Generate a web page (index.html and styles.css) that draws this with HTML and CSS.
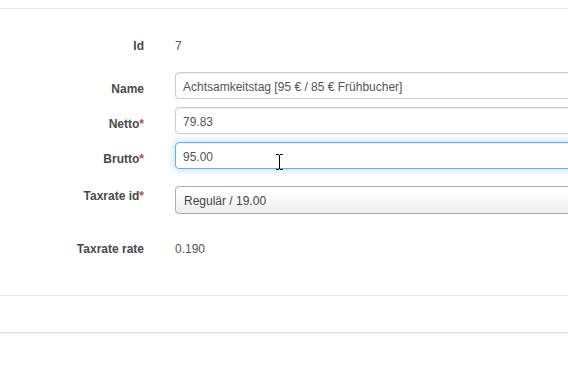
FILE: index.html
```html
<!DOCTYPE html>
<html lang="de">
<head>
    <meta charset="UTF-8">
    <title>Taxrate bearbeiten</title>
    <link rel="stylesheet" href="styles.css">
</head>
<body>

    <div class="topbar"></div>

    <form class="edit-form">
        <div class="row static">
            <label>Id</label>
            <span class="value">7</span>
        </div>

        <div class="row">
            <label for="name">Name</label>
            <input type="text" id="name" value="Achtsamkeitstag [95 € / 85 € Frühbucher]">
        </div>

        <div class="row">
            <label for="netto">Netto<span class="req">*</span></label>
            <input type="text" id="netto" value="79.83">
        </div>

        <div class="row">
            <label for="brutto">Brutto<span class="req">*</span></label>
            <div class="field">
                <input type="text" id="brutto" class="focused" value="95.00">
                <!-- mouse cursor from the screenshot -->
                <svg class="cursor" width="9" height="16" viewBox="0 0 9 16">
                    <path d="M1 0.5h3M5 0.5h3M4.5 1v14M1 15.5h3M5 15.5h3" stroke="#000" stroke-width="1" fill="none"/>
                </svg>
            </div>
        </div>

        <div class="row select-row">
            <label for="taxrate">Taxrate id<span class="req">*</span></label>
            <div class="select">Regulär / 19.00</div>
        </div>

        <div class="row static rate-row">
            <label>Taxrate rate</label>
            <span class="value">0.190</span>
        </div>
    </form>

    <div class="form-footer"></div>
    <div class="page-bottom"></div>

</body>
</html>
```

FILE: styles.css
```css
body {
    margin: 0;
    font-family: "Liberation Sans", Arial, sans-serif;
    font-size: 12px;
    color: #555;
    background: #fff;
    overflow: hidden;
}
.topbar {
    height: 8px;
    border-bottom: 1px solid #e8e8e8;
}
.edit-form {
    padding-top: 27px;
    overflow: hidden;
}
.row {
    display: grid;
    grid-template-columns: 144px 420px;
    column-gap: 31px;
    margin-bottom: 8px;
}
.row label {
    text-align: right;
    font-weight: bold;
    color: #4a4a4a;
    line-height: 20px;
    padding-top: 7px;
}
.row.static {
    margin-bottom: 16px;
}
.row.static label,
.row.static .value {
    padding-top: 0;
    line-height: 20px;
}
.req {
    color: #b94a48;
}
.field {
    position: relative;
}
input {
    box-sizing: border-box;
    width: 420px;
    height: 27px;
    padding: 2px 7px 0;
    font-family: "Liberation Sans", Arial, sans-serif;
    font-size: 12px;
    color: #555;
    border: 1px solid #ccc;
    border-radius: 4px;
    box-shadow: inset 0 1px 1px rgba(0, 0, 0, 0.075);
    outline: none;
}
input.focused {
    border-color: #66afe9;
    box-shadow: inset 0 1px 1px rgba(0, 0, 0, 0.075), 0 0 8px rgba(102, 175, 233, 0.5);
}
.cursor {
    position: absolute;
    left: 100px;
    top: 12px;
}
.select-row {
    margin-top: 17px;
    margin-bottom: 25px;
}
.select-row label {
    padding-top: 0;
}
.select {
    box-sizing: border-box;
    width: 420px;
    height: 28px;
    line-height: 26px;
    padding: 1px 8px 0;
    border: 1px solid #aaa;
    border-radius: 4px;
    background: linear-gradient(#fff 20%, #ececec);
    color: #444;
}
.row.rate-row {
    margin-bottom: 0;
}
.form-footer {
    margin-top: 36px;
    border-bottom: 1px solid #e8e8e8;
    height: 0;
}
.page-bottom {
    margin-top: 36px;
    border-top: 1px solid #ddd;
    height: 3px;
    background: linear-gradient(#f4f4f4, #fff);
}
```
